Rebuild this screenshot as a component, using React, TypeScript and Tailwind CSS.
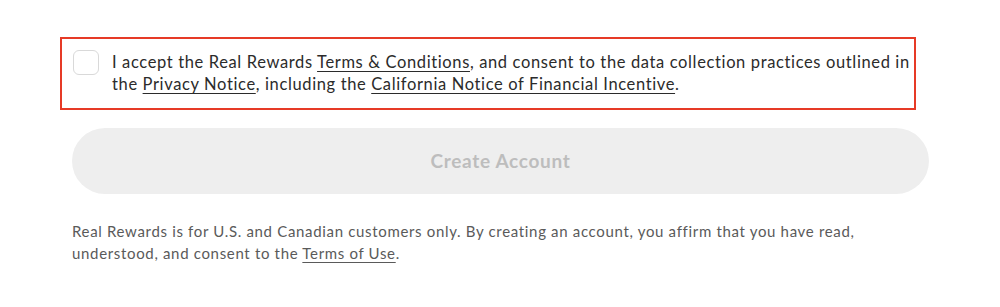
export default function App() {
  return (
    <div className="min-h-[307px] w-[1000px] bg-white font-['Lato','Liberation_Sans',sans-serif]">
      <div className="px-[72px] pt-[37px]">
        {/* Consent box */}
        <div className="-ml-[12px] flex w-[856px] items-start gap-[13px] border-2 border-[#e63a26] pb-[13px] pl-[11px] pt-[10px]">
          <div className="mt-[1px] h-[25px] w-[26px] shrink-0 rounded-[6px] border border-[#d9d9d9] bg-white" />
          <p className="mt-[2px] whitespace-nowrap text-[16.5px] leading-[22px] tracking-[0.63px] text-[#2b2b2b]">
            I accept the Real Rewards{' '}
            <a className="underline decoration-1 underline-offset-[3px]">Terms &amp; Conditions</a>, and consent to the data
            collection practices outlined in
            <br />
            the <a className="underline decoration-1 underline-offset-[3px]">Privacy Notice</a>, including the{' '}
            <a className="underline decoration-1 underline-offset-[3px]">California Notice of Financial Incentive</a>.
          </p>
        </div>

        {/* Button */}
        <button className="mt-[18px] flex h-[66px] w-[857px] items-center justify-center rounded-full bg-[#eeeeee] pt-[1px] text-[19px] font-bold tracking-[0.7px] text-[#bdbdbd]">
          Create Account
        </button>

        {/* Footer */}
        <p className="mt-[26px] whitespace-nowrap text-[15px] leading-[22px] tracking-[0.67px] text-[#5a5a5a]">
          Real Rewards is for U.S. and Canadian customers only. By creating an account, you affirm that you have read,
          <br />
          understood, and consent to the{' '}
          <a className="underline decoration-1 underline-offset-[3px]">Terms of Use</a>.
        </p>
      </div>
    </div>
  );
}
